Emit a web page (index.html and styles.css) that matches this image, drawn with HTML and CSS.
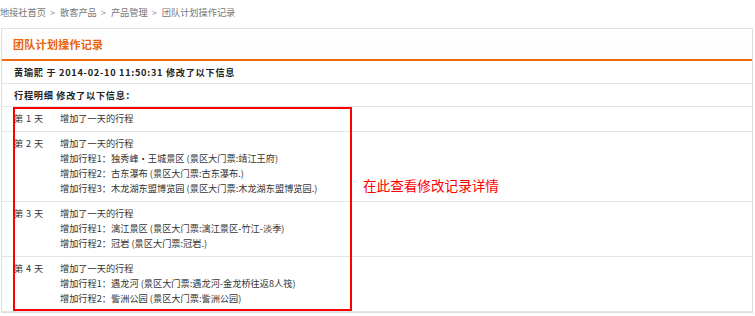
FILE: index.html
```html
<!DOCTYPE html>
<html>
<head>
  <meta charset="utf-8">
  <link rel="stylesheet" href="styles.css">
</head>
<body>
  <div class="crumbs">
    <span>地接社首页</span><i>&gt;</i><span>散客产品</span><i>&gt;</i><span>产品管理</span><i>&gt;</i><span>团队计划操作记录</span>
  </div>
  <div class="panel">
    <div class="panel-head">团队计划操作记录</div>
    <div class="info">黄瑜熙 于 2014-02-10 11:50:31 修改了以下信息</div>
    <div class="info">行程明细 修改了以下信息：</div>
    <div class="days">
      <div class="day">
        <div class="label">第 1 天</div>
        <div class="lines">
          <p>增加了一天的行程</p>
        </div>
      </div>
      <div class="day">
        <div class="label">第 2 天</div>
        <div class="lines">
          <p>增加了一天的行程</p>
          <p>增加行程1：独秀峰•王城景区 (景区大门票:靖江王府)</p>
          <p>增加行程2：古东瀑布 (景区大门票:古东瀑布.)</p>
          <p>增加行程3：木龙湖东盟博览园 (景区大门票:木龙湖东盟博览园.)</p>
        </div>
      </div>
      <div class="day">
        <div class="label">第 3 天</div>
        <div class="lines">
          <p>增加了一天的行程</p>
          <p>增加行程1：漓江景区 (景区大门票:漓江景区-竹江-淡季)</p>
          <p>增加行程2：冠岩 (景区大门票:冠岩.)</p>
        </div>
      </div>
      <div class="day">
        <div class="label">第 4 天</div>
        <div class="lines">
          <p>增加了一天的行程</p>
          <p>增加行程1：遇龙河 (景区大门票:遇龙河-金龙桥往返8人筏)</p>
          <p>增加行程2：訾洲公园 (景区大门票:訾洲公园)</p>
        </div>
      </div>
      <div class="mark"></div>
      <div class="note">在此查看修改记录详情</div>
    </div>
  </div>
</body>
</html>
```

FILE: styles.css
```css
body {
  margin: 0;
  background: #fff;
  font-family: "Noto Sans CJK SC", "DejaVu Sans", sans-serif;
  color: #333;
  font-size: 9.2px;
}

.crumbs {
  height: 28px;
  line-height: 24px;
  color: #777;
  white-space: nowrap;
}

.crumbs i {
  font-style: normal;
  padding: 0 5px 0 4px;
  color: #999;
}

.panel {
  margin: 0 2px 0 1px;
  border: 1px solid #ddd;
  border-top-color: #e2e2e2;
}

.panel-head {
  height: 30px;
  line-height: 30px;
  padding-left: 11px;
  background: #fdfdfd;
  color: #ea640c;
  font-weight: bold;
  font-size: 11px;
  letter-spacing: 0.3px;
  border-bottom: 2px solid #ee6a0e;
}

.info {
  height: 22px;
  line-height: 22px;
  padding-left: 12px;
  font-weight: bold;
  color: #222;
  letter-spacing: 0.7px;
  border-bottom: 1px solid #e4e4e4;
}

.days {
  position: relative;
}

.day {
  display: grid;
  grid-template-columns: 46px 1fr;
  padding: 4px 0 5px 12px;
  border-bottom: 1px solid #e4e4e4;
  line-height: 15px;
}

.day:last-of-type {
  border-bottom: none;
}

.label {
  letter-spacing: 0.4px;
}

.lines p {
  margin: 0;
}

.mark {
  position: absolute;
  left: 11px;
  top: 0;
  width: 335px;
  height: 200px;
  border: 2px solid #f00;
}

.note {
  position: absolute;
  left: 361px;
  top: 69px;
  color: #f00;
  font-size: 13.6px;
  line-height: 18px;
}
```
